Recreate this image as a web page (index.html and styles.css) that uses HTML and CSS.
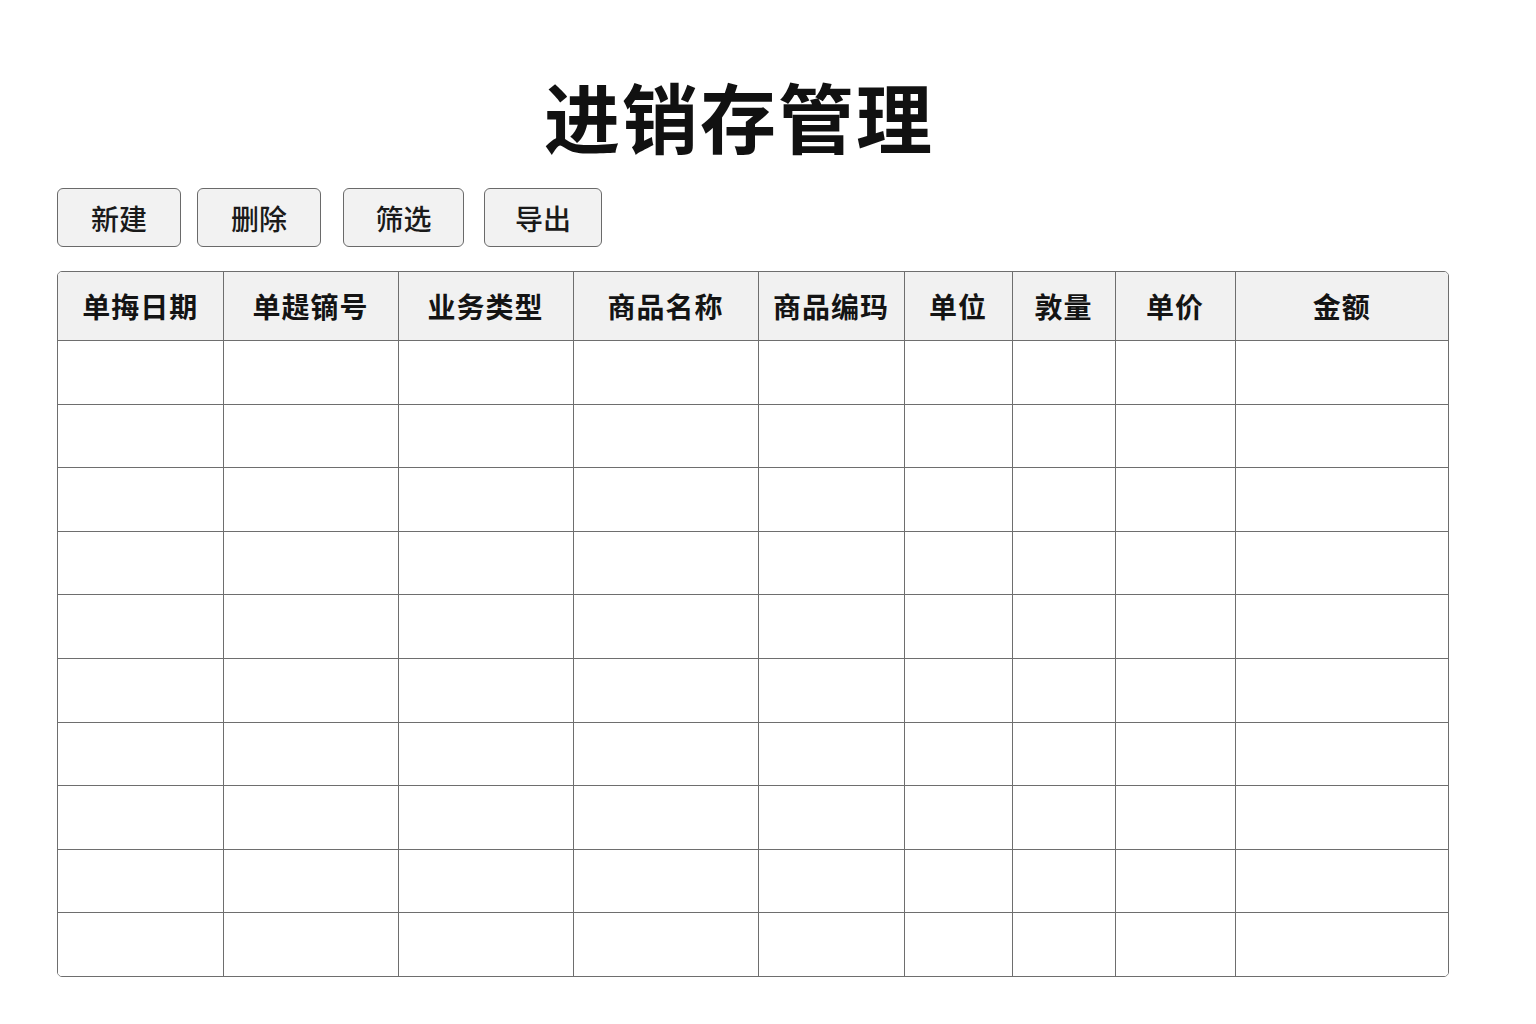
FILE: index.html
```html
<!DOCTYPE html>
<html lang="zh-CN">
<head>
<meta charset="utf-8">
<title>进销存管理</title>
<link rel="stylesheet" href="styles.css">
</head>
<body>
<div class="page">
  <h1 class="title">进销存管理</h1>
  <div class="toolbar">
    <button class="btn b1">新建</button>
    <button class="btn b2">删除</button>
    <button class="btn b3">筛选</button>
    <button class="btn b4">导出</button>
  </div>
  <div class="table-wrap">
    <table class="grid">
      <colgroup>
        <col class="c1"><col class="c2"><col class="c3"><col class="c4"><col class="c5"><col class="c6"><col class="c7"><col class="c8"><col class="c9">
      </colgroup>
      <thead>
        <tr><th>单挴日期</th><th>单趧镝号</th><th>业务类型</th><th>商品名称</th><th>商品编玛</th><th>单位</th><th>敦量</th><th>单价</th><th>金额</th></tr>
      </thead>
      <tbody>
        <tr><td></td><td></td><td></td><td></td><td></td><td></td><td></td><td></td><td></td></tr>
        <tr><td></td><td></td><td></td><td></td><td></td><td></td><td></td><td></td><td></td></tr>
        <tr><td></td><td></td><td></td><td></td><td></td><td></td><td></td><td></td><td></td></tr>
        <tr><td></td><td></td><td></td><td></td><td></td><td></td><td></td><td></td><td></td></tr>
        <tr><td></td><td></td><td></td><td></td><td></td><td></td><td></td><td></td><td></td></tr>
        <tr><td></td><td></td><td></td><td></td><td></td><td></td><td></td><td></td><td></td></tr>
        <tr><td></td><td></td><td></td><td></td><td></td><td></td><td></td><td></td><td></td></tr>
        <tr><td></td><td></td><td></td><td></td><td></td><td></td><td></td><td></td><td></td></tr>
        <tr><td></td><td></td><td></td><td></td><td></td><td></td><td></td><td></td><td></td></tr>
        <tr><td></td><td></td><td></td><td></td><td></td><td></td><td></td><td></td><td></td></tr>
      </tbody>
    </table>
  </div>
</div>
</body>
</html>
```
FILE: styles.css
```css
html, body {
  margin: 0;
  padding: 0;
  background: #ffffff;
}
body {
  font-family: "Noto Sans CJK SC", "Noto Sans", sans-serif;
  color: #111;
}
.page {
  width: 1392px;
  padding: 76px 0 0 57px;
}
.title {
  margin: 0;
  padding-right: 28px;
  text-align: center;
  font-size: 76px;
  line-height: 78px;
  font-weight: 700;
  letter-spacing: 2px;
  color: #111;
}
.toolbar {
  display: flex;
  margin-top: 34px;
  height: 59px;
}
.btn {
  box-sizing: border-box;
  height: 59px;
  padding: 0;
  border: 1px solid #6a6a6a;
  border-radius: 6px;
  background: #f2f2f2;
  font-family: "Noto Sans CJK SC", sans-serif;
  font-size: 28px;
  font-weight: 500;
  color: #1a1a1a;
  line-height: 1;
}
.b1 { width: 124px; }
.b2 { width: 124px; margin-left: 16px; }
.b3 { width: 121px; margin-left: 22px; }
.b4 { width: 118px; margin-left: 20px; }
.table-wrap {
  margin-top: 24px;
  width: 1392px;
  box-sizing: border-box;
  border: 1px solid #6e6e6e;
  border-radius: 5px;
  overflow: hidden;
}
.grid {
  width: 100%;
  border-collapse: collapse;
  table-layout: fixed;
}
.c1 { width: 165px; }
.c2 { width: 175px; }
.c3 { width: 175px; }
.c4 { width: 185px; }
.c5 { width: 146px; }
.c6 { width: 108px; }
.c7 { width: 103px; }
.c8 { width: 120px; }
.c9 { width: auto; }
.grid th, .grid td {
  border-right: 1px solid #6e6e6e;
  border-bottom: 1px solid #6e6e6e;
  padding: 0;
}
.grid th:last-child, .grid td:last-child {
  border-right: none;
}
.grid tbody tr:last-child td {
  border-bottom: none;
}
.grid th {
  height: 68px;
  background: #f1f1f1;
  font-size: 28px;
  font-weight: 700;
  color: #141414;
  text-align: center;
  letter-spacing: 1px;
}
.grid td {
  height: 62.6px;
  background: #fff;
}
```
